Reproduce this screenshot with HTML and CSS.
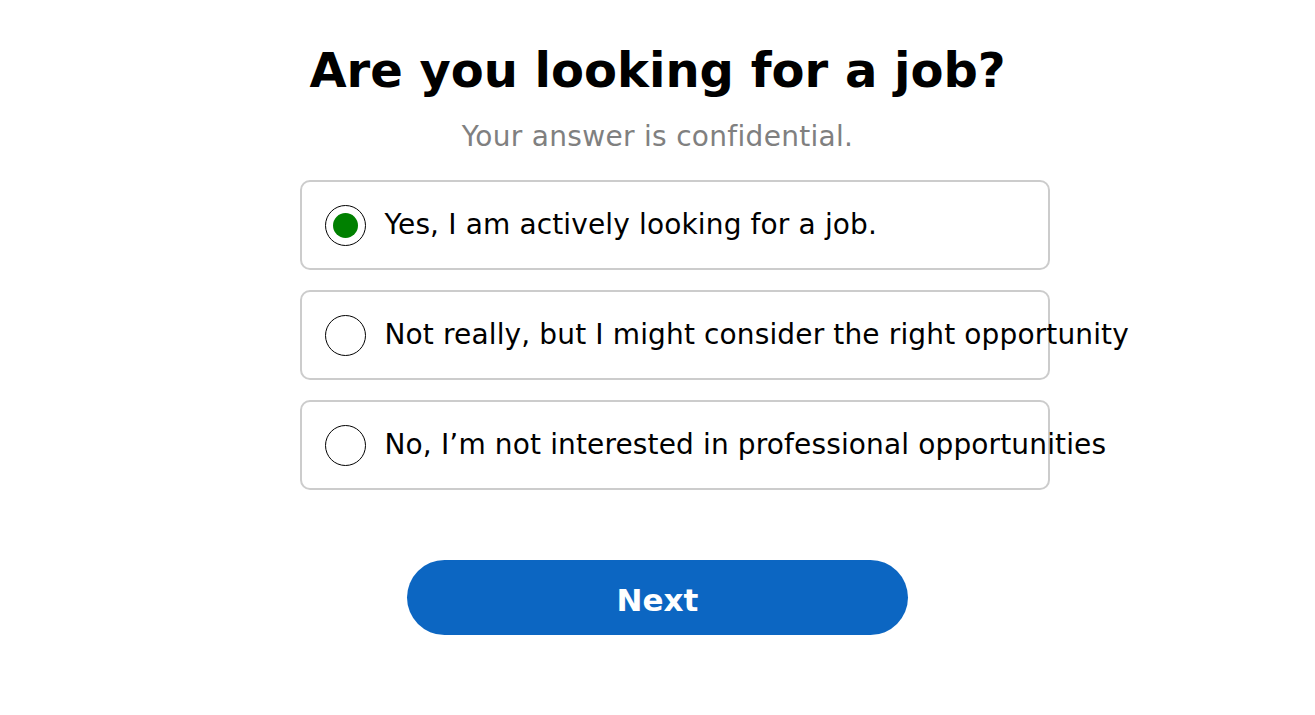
FILE: index.html
```html
<!DOCTYPE html>
<html lang="en">
<head>
<meta charset="utf-8">
<title>Are you looking for a job?</title>
<link rel="stylesheet" href="styles.css">
</head>
<body>
<main class="page">
  <h1 class="title">Are you looking for a job?</h1>
  <p class="subtitle">Your answer is confidential.</p>
  <ul class="options">
    <li class="option">
      <span class="radio radio--checked"><span class="radio-dot"></span></span>
      <span class="option-label">Yes, I am actively looking for a job.</span>
    </li>
    <li class="option">
      <span class="radio"></span>
      <span class="option-label">Not really, but I might consider the right opportunity</span>
    </li>
    <li class="option">
      <span class="radio"></span>
      <span class="option-label">No, I’m not interested in professional opportunities</span>
    </li>
  </ul>
  <div class="actions">
    <button class="next-btn" type="button">Next</button>
  </div>
</main>
</body>
</html>
```

FILE: styles.css
```css
html, body {
  margin: 0;
  padding: 0;
  background: #ffffff;
}

body {
  font-family: "DejaVu Sans", sans-serif;
  color: #000000;
}

.page {
  display: flex;
  flex-direction: column;
  align-items: center;
  padding-top: 40px;
}

.title {
  margin: 0;
  font-size: 48px;
  font-weight: bold;
  line-height: 60px;
}

.subtitle {
  margin: 22px 0 0;
  font-size: 28px;
  letter-spacing: 0.3px;
  line-height: 30px;
  color: #808080;
}

.options {
  list-style: none;
  margin: 28px 0 0;
  padding: 0 0 0 34px;
  width: 750px;
  display: flex;
  flex-direction: column;
  gap: 20px;
}

.option {
  box-sizing: border-box;
  height: 90px;
  border: 2px solid #cccccc;
  border-radius: 10px;
  display: flex;
  align-items: center;
  padding-left: 23px;
  gap: 19px;
  white-space: nowrap;
}

.radio {
  box-sizing: border-box;
  width: 41px;
  height: 41px;
  flex: 0 0 41px;
  border: 1.5px solid #000000;
  border-radius: 50%;
  display: flex;
  align-items: center;
  justify-content: center;
  background: #ffffff;
}

.radio-dot {
  width: 25px;
  height: 25px;
  border-radius: 50%;
  background: #008000;
}

.option-label {
  font-size: 28px;
  letter-spacing: 0.14px;
  line-height: 30px;
}

.actions {
  margin-top: 70px;
  display: flex;
  justify-content: center;
}

.next-btn {
  width: 501px;
  height: 75px;
  padding: 4px 0 0;
  border: none;
  border-radius: 38px;
  background: #0c66c2;
  color: #ffffff;
  font-family: "DejaVu Sans", sans-serif;
  font-size: 31px;
  font-weight: bold;
  cursor: pointer;
}
```
